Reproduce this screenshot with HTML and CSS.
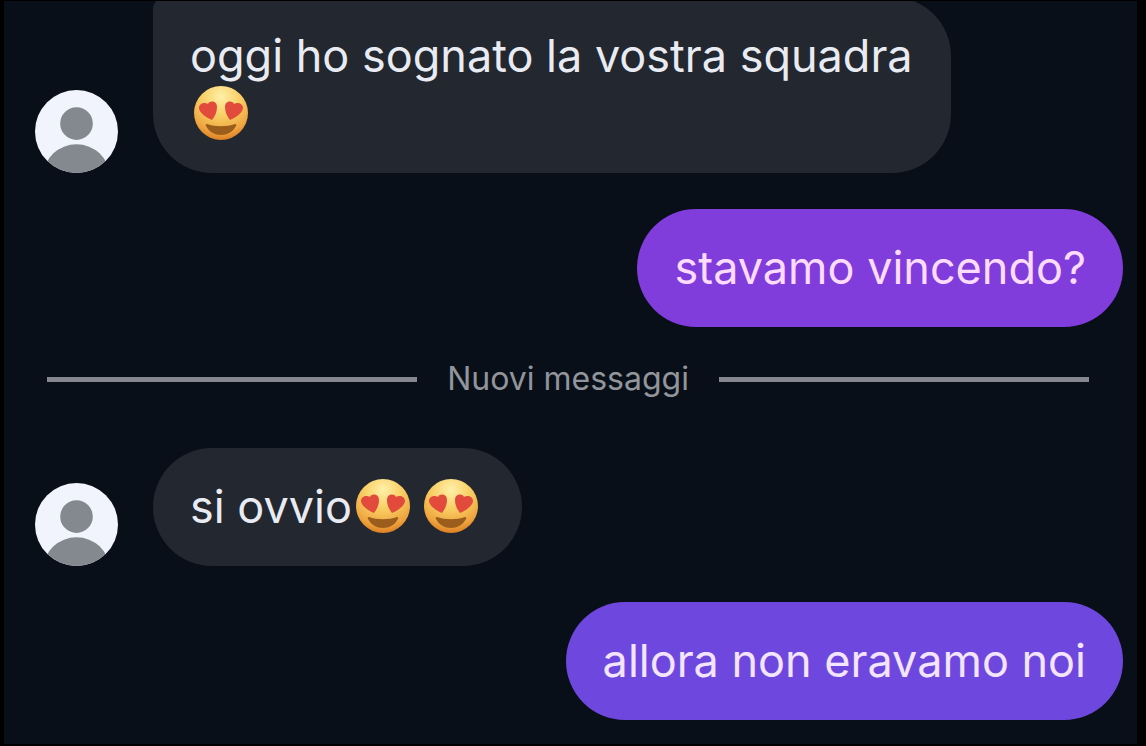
FILE: index.html
```html
<!DOCTYPE html>
<html lang="it">
<head>
    <meta charset="UTF-8">
    <meta name="viewport" content="width=device-width, initial-scale=1.0">
    <title>Chat</title>
    <link rel="stylesheet" href="styles.css">
</head>
<body>
    <!-- Shared icons -->
    <svg class="defs" aria-hidden="true">
        <defs>
            <radialGradient id="face" cx="0.5" cy="0.2" r="0.82">
                <stop offset="0" stop-color="#fff0a8"/>
                <stop offset="0.45" stop-color="#f8cd62"/>
                <stop offset="0.8" stop-color="#efa43f"/>
                <stop offset="1" stop-color="#d97a20"/>
            </radialGradient>
            <clipPath id="round"><circle cx="42" cy="42" r="42"/></clipPath>
        </defs>
        <symbol id="heart-eyes" viewBox="0 0 54 54">
            <circle cx="27" cy="27" r="27" fill="url(#face)"/>
            <path d="M18 34c-7-3-13-8-13-12 0-5 6-6 9-4 2-4 9-3 9 3 0 5-2 9-5 13z" fill="#e24a3c"/>
            <path d="M36 34c7-3 13-8 13-12 0-5-6-6-9-4-2-4-9-3-9 3 0 5 2 9 5 13z" fill="#e24a3c"/>
            <path d="M13 38c8 3 20 3 28 0 1 0 2 1 1 2-3 6-9 9-15 9s-12-3-15-9c-1-1 0-2 1-2z" fill="#9a5d1c"/>
        </symbol>
        <symbol id="avatar" viewBox="0 0 84 84">
            <g clip-path="url(#round)">
                <rect width="84" height="84" fill="#f1f4fd"/>
                <circle cx="42" cy="34" r="16.500" fill="#84888f"/>
                <ellipse cx="42" cy="86" rx="33" ry="31" fill="#84888f"/>
            </g>
        </symbol>
    </svg>

    <main class="chat">
        <div class="message received">
            <svg class="avatar" role="img" aria-label="Profilo"><use href="#avatar"/></svg>
            <p class="bubble grouped">oggi ho sognato la vostra squadra <svg class="emoji"><use href="#heart-eyes"/></svg></p>
        </div>

        <div class="message sent">
            <p class="bubble violet">stavamo vincendo?</p>
        </div>

        <div class="divider"><span>Nuovi messaggi</span></div>

        <div class="message received">
            <svg class="avatar" role="img" aria-label="Profilo"><use href="#avatar"/></svg>
            <p class="bubble">si ovvio<svg class="emoji"><use href="#heart-eyes"/></svg><svg class="emoji"><use href="#heart-eyes"/></svg></p>
        </div>

        <div class="message sent">
            <p class="bubble indigo">allora non eravamo noi</p>
        </div>
    </main>
</body>
</html>
```
FILE: styles.css
```css
* {
    margin: 0;
    padding: 0;
    box-sizing: border-box;
}

body {
    background-color: #000;
    color: #e9ebf2;
    font-family: Inter, "Liberation Sans", sans-serif;
}

.defs {
    position: absolute;
    width: 0;
    height: 0;
}

/* Newest message stays at the bottom, older ones run off the top */
.chat {
    display: flex;
    flex-direction: column;
    justify-content: flex-end;
    gap: 36px;
    height: 100vh;
    overflow: hidden;
    padding: 0 14px 24px 31px;
    border: solid #000;
    border-width: 1px 9px 2px 4px;
    background-color: #090f18;
}

.message {
    display: flex;
    flex-shrink: 0;
    align-items: flex-end;
    gap: 35px;
}

.sent {
    justify-content: flex-end;
}

.avatar {
    flex-shrink: 0;
    width: 83px;
    height: 83px;
}

.bubble {
    max-width: 798px;
    padding: 30px 37px;
    border-radius: 59px;
    background-color: #23272f;
    font-size: 45px;
    line-height: 58px;
}

.grouped {
    border-top-left-radius: 12px;
}

.violet {
    background-color: #813ddc;
    color: #fbdcff;
}

.indigo {
    background-color: #6e48de;
    color: #f3e4ff;
}

.emoji {
    width: 54px;
    height: 54px;
    margin: 0 7px 0 4px;
    vertical-align: -10px;
}

.emoji + .emoji {
    margin-left: 7px;
}

.divider {
    display: flex;
    flex-shrink: 0;
    align-items: center;
    gap: 30px;
    margin: 0 34px 17px 12px;
    color: #92959b;
    font-size: 32px;
    line-height: 32px;
}

.divider::before,
.divider::after {
    content: "";
    flex: 1;
    height: 5px;
    background-color: #84878f;
}
```
